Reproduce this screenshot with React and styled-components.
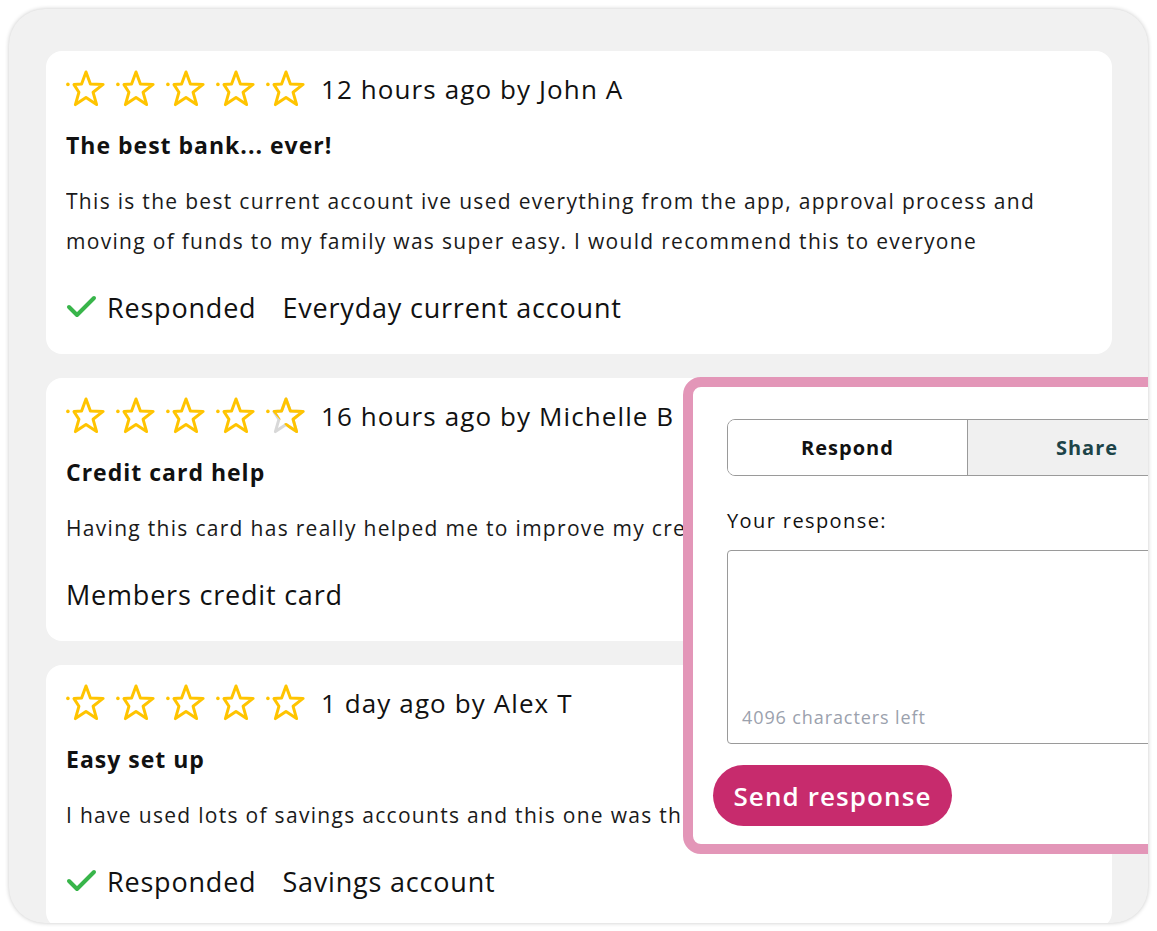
import styled, { createGlobalStyle } from "styled-components";

const GlobalStyle = createGlobalStyle`
    * { box-sizing: border-box; }
    body {
        margin: 0;
        background: #ffffff;
        font-family: "Open Sans", "Noto Sans", sans-serif;
        color: #111;
    }
`

const Page = styled.div`
    padding: 9px;
`

const Frame = styled.div`
    position: relative;
    height: 914px;
    width: 1139px;
    background: #f1f1f1;
    border-radius: 36px;
    box-shadow: 0 0 4px rgba(0, 0, 0, 0.22);
    overflow: hidden;
    padding: 42px 36px 0 37px;
`

const ReviewList = styled.div`
    display: flex;
    flex-direction: column;
    gap: 24px;
`

const Card = styled.div`
    background: #fff;
    border-radius: 16px;
    padding: 17px 20px 29px 20px;
`

const Meta = styled.div`
    display: flex;
    align-items: center;
    height: 42px;
`

const Stars = styled.div`
    display: flex;
    gap: 10px;
    margin-right: 15px;
`

const When = styled.span`
    font-size: 26px;
    letter-spacing: 1.1px;
`

const Title = styled.h3`
    margin: 20px 0 0;
    font-size: 23px;
    line-height: 30px;
    font-weight: 700;
    letter-spacing: 1px;
`

const Body = styled.p`
    margin: 21px 0 0;
    font-size: 21px;
    line-height: 40px;
    letter-spacing: 1.3px;
    white-space: nowrap;
    overflow: hidden;
    color: #1a1a1a;
`

const Footer = styled.div`
    display: flex;
    align-items: center;
    margin-top: 28px;
    height: 36px;
    font-size: 27px;
    letter-spacing: 0.8px;
`

const Status = styled.span`
    display: flex;
    align-items: center;
    gap: 10px;
    margin-right: 26px;
`

const Popup = styled.div`
    position: absolute;
    left: 674px;
    top: 368px;
    width: 567px;
    height: 477px;
    border: 10px solid #e396b8;
    border-radius: 18px;
    background: #fff;
    padding: 32px 0 0 20px;
    display: flex;
    flex-direction: column;
`

const Form = styled.div`
    padding-left: 14px;
    display: flex;
    flex-direction: column;
`

const Tabs = styled.div`
    display: grid;
    grid-template-columns: 1fr 1fr;
    width: 480px;
    height: 57px;
    border: 1.5px solid #9a9a9a;
    border-radius: 8px;
    overflow: hidden;
`

const Tab = styled.div`
    display: flex;
    align-items: center;
    justify-content: center;
    font-size: 20px;
    font-weight: 700;
    letter-spacing: 1px;
    background: ${p => (p.$active ? "#fff" : "#f0f0f0")};
    color: ${p => (p.$active ? "#111" : "#1d4448")};
    border-left: ${p => (p.$active ? "none" : "1.5px solid #9a9a9a")};
`

const Label = styled.label`
    margin-top: 32px;
    font-size: 20px;
    font-weight: 500;
    line-height: 26px;
    letter-spacing: 1.4px;
`

const TextBox = styled.div`
    margin-top: 16px;
    width: 480px;
    height: 194px;
    border: 1.5px solid #9a9a9a;
    border-radius: 4px;
    display: flex;
    align-items: flex-end;
    padding: 0 14px 14px;
    font-size: 18px;
    letter-spacing: 0.9px;
    color: #9ba1ad;
`

const SendButton = styled.button`
    margin-top: 21px;
    align-self: flex-start;
    width: 239px;
    height: 61px;
    border: none;
    border-radius: 31px;
    background: #c72b6d;
    color: #fff;
    font-family: inherit;
    font-size: 26px;
    font-weight: 600;
    letter-spacing: 1.1px;
    padding: 0;
`

const STAR = "M8 15.6 L15.6 14.9 L20 3 L24.4 14.9 L37.1 15.4 L27.1 23.3 L30.6 35.6 L20 28.5 L9.4 35.6 L12.9 23.3 Z"

function Star({ half }) {
    const id = "clip-half"
    return (
        <svg width="40" height="40" viewBox="0 0 40 40" fill="none"
            strokeWidth="3" strokeLinejoin="round" strokeLinecap="round">
            {half && (
                <defs>
                    <clipPath id={id}>
                        <polygon points="0,0 40,0 40,40 29.6,40 6,15 0,15" />
                    </clipPath>
                </defs>
            )}
            {half && <path d={STAR} stroke="#d8d8d8" />}
            <path d={STAR} stroke="#ffc400" clipPath={half ? `url(#${id})` : undefined} />
            <circle cx="1.9" cy="15.4" r="1.8" fill="#ffc400" />
        </svg>
    )
}

function Check() {
    return (
        <svg width="31" height="24" viewBox="0 0 31 24" fill="none">
            <polyline points="3,12 11,20 28,3" stroke="#38b54a" strokeWidth="4"
                strokeLinecap="round" strokeLinejoin="round" />
        </svg>
    )
}

const reviews = [
    {
        when: "12 hours ago by John A",
        rating: 5,
        title: "The best bank... ever!",
        lines: [
            "This is the best current account ive used everything from the app, approval process and",
            "moving of funds to my family was super easy. I would recommend this to everyone",
        ],
        responded: true,
        product: "Everyday current account",
    },
    {
        when: "16 hours ago by Michelle B",
        rating: 4.5,
        title: "Credit card help",
        lines: ["Having this card has really helped me to improve my credit score and manage my spending"],
        responded: false,
        product: "Members credit card",
    },
    {
        when: "1 day ago by Alex T",
        rating: 5,
        title: "Easy set up",
        lines: ["I have used lots of savings accounts and this one was the easiest to set up by far"],
        responded: true,
        product: "Savings account",
    },
]

export default function App() {
    return (
        <Page>
            <GlobalStyle />
            <Frame>
                <ReviewList>
                    {reviews.map((r, i) => (
                        <Card key={i}>
                            <Meta>
                                <Stars>
                                    {[0, 1, 2, 3, 4].map(n => (
                                        <Star key={n} half={r.rating - n === 0.5} />
                                    ))}
                                </Stars>
                                <When>{r.when}</When>
                            </Meta>
                            <Title>{r.title}</Title>
                            <Body>
                                {r.lines.map((l, j) => (
                                    <span key={j}>{l}{j < r.lines.length - 1 && <br />}</span>
                                ))}
                            </Body>
                            <Footer>
                                {r.responded && (
                                    <Status><Check />Responded</Status>
                                )}
                                <span>{r.product}</span>
                            </Footer>
                        </Card>
                    ))}
                </ReviewList>
                <Popup>
                    <Form>
                        <Tabs>
                            <Tab $active>Respond</Tab>
                            <Tab>Share</Tab>
                        </Tabs>
                        <Label>Your response:</Label>
                        <TextBox>4096 characters left</TextBox>
                    </Form>
                    <SendButton>Send response</SendButton>
                </Popup>
            </Frame>
        </Page>
    )
}
